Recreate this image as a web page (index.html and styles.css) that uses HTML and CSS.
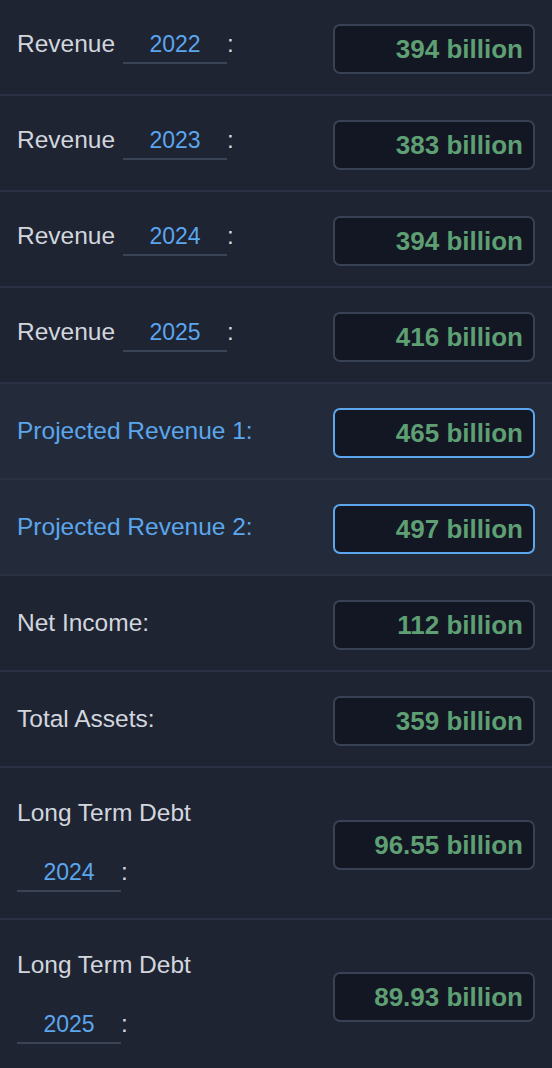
FILE: index.html
```html
<!DOCTYPE html>
<html lang="en">
<head>
    <meta charset="UTF-8">
    <meta name="viewport" content="width=device-width, initial-scale=1.0">
    <title>Financials</title>
    <link rel="stylesheet" href="styles.css">
</head>
<body>
<div class="sheet">
    <div class="row">
        <div class="label">Revenue <input class="year" value="2022"><span class="colon">:</span></div>
        <div class="value">394 billion</div>
    </div>
    <div class="row">
        <div class="label">Revenue <input class="year" value="2023"><span class="colon">:</span></div>
        <div class="value">383 billion</div>
    </div>
    <div class="row">
        <div class="label">Revenue <input class="year" value="2024"><span class="colon">:</span></div>
        <div class="value">394 billion</div>
    </div>
    <div class="row">
        <div class="label">Revenue <input class="year" value="2025"><span class="colon">:</span></div>
        <div class="value">416 billion</div>
    </div>
    <div class="row projected">
        <div class="label">Projected Revenue 1:</div>
        <div class="value">465 billion</div>
    </div>
    <div class="row projected">
        <div class="label">Projected Revenue 2:</div>
        <div class="value">497 billion</div>
    </div>
    <div class="row">
        <div class="label">Net Income:</div>
        <div class="value">112 billion</div>
    </div>
    <div class="row">
        <div class="label">Total Assets:</div>
        <div class="value">359 billion</div>
    </div>
    <div class="row tall">
        <div class="label stacked">
            <span>Long Term Debt</span>
            <div class="year-line"><input class="year" value="2024"><span class="colon">:</span></div>
        </div>
        <div class="value">96.55 billion</div>
    </div>
    <div class="row tall">
        <div class="label stacked">
            <span>Long Term Debt</span>
            <div class="year-line"><input class="year" value="2025"><span class="colon">:</span></div>
        </div>
        <div class="value">89.93 billion</div>
    </div>
</div>
</body>
</html>
```

FILE: styles.css
```css
body {
    margin: 0;
    font-family: "Liberation Sans", Arial, sans-serif;
    background-color: #1F2433;
    color: #D2D6DE;
}
.sheet {
    display: flex;
    flex-direction: column;
}
.row {
    display: flex;
    justify-content: space-between;
    align-items: center;
    height: 90px;
    padding: 4px 17px 0;
    border-bottom: 2px solid #2A3142;
}
.row.projected {
    background-color: #232B3B;
}
.row.projected .label {
    color: #5BA6EC;
}
.row.projected .value {
    border-color: #5BA6EC;
}
.row.tall {
    height: 146px;
}
.label {
    font-size: 24.5px;
    display: flex;
    align-items: baseline;
    margin-top: -4px;
}
.label.stacked {
    flex-direction: column;
    align-items: flex-start;
    gap: 31px;
    margin-top: 0;
}
.year-line {
    display: flex;
    align-items: baseline;
}
.year {
    width: 104px;
    box-sizing: border-box;
    margin-left: 8px;
    padding: 0 0 4px;
    border: none;
    border-bottom: 2px solid #3B4356;
    background: transparent;
    color: #5BA6EC;
    font-family: "Liberation Sans", Arial, sans-serif;
    font-size: 23px;
    text-align: center;
    outline: none;
}
.year-line .year {
    margin-left: 0;
}
.value {
    width: 202px;
    height: 50px;
    box-sizing: border-box;
    border: 2px solid #394155;
    border-radius: 7px;
    background-color: #121723;
    color: #5F9F74;
    font-size: 26px;
    font-weight: bold;
    text-align: right;
    padding-right: 10px;
    line-height: 46px;
}
```
